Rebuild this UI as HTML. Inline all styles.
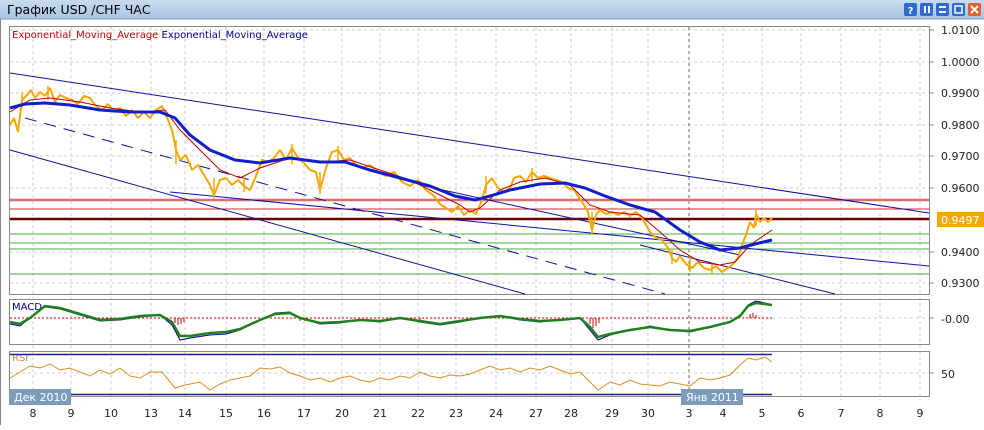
<!DOCTYPE html>
<html><head><meta charset="utf-8"><style>
body{margin:0;width:984px;height:425px;overflow:hidden;background:#fff;font-family:"Liberation Sans","DejaVu Sans",sans-serif}
</style></head><body>
<svg width="984" height="425" xmlns="http://www.w3.org/2000/svg" font-family="'DejaVu Sans','Liberation Sans',sans-serif">
<defs><linearGradient id="tb" x1="0" y1="0" x2="0" y2="1"><stop offset="0" stop-color="#c8dbef"/><stop offset="1" stop-color="#a9c4e2"/></linearGradient></defs>
<rect x="0" y="0" width="984" height="19" fill="url(#tb)"/>
<line x1="0" y1="19" x2="984" y2="19" stroke="#7d9cc4"/>
<text x="7" y="14" font-size="12.5" fill="#000" font-family="'DejaVu Sans',sans-serif">График USD /CHF  ЧАС</text>
<g>
<rect x="904" y="3" width="13" height="13" rx="2" fill="#2f6ad0"/><text x="910.5" y="14" font-size="10" fill="#fff" text-anchor="middle" font-weight="bold">?</text>
<rect x="920" y="3" width="13" height="13" rx="2" fill="#2f6ad0"/><rect x="924" y="6" width="2" height="7" fill="#fff"/><rect x="928" y="6" width="2" height="7" fill="#fff"/>
<rect x="936" y="3" width="13" height="13" rx="2" fill="#2f6ad0"/><rect x="939" y="6" width="7" height="2" fill="#fff"/><rect x="939" y="11" width="7" height="2" fill="#fff"/>
<rect x="952" y="3" width="13" height="13" rx="2" fill="#2f6ad0"/><rect x="955" y="6" width="7" height="7" fill="none" stroke="#fff" stroke-width="1.5"/>
<rect x="968" y="3" width="13" height="13" rx="2" fill="#e06030"/><path d="M971 6l7 7M978 6l-7 7" stroke="#fff" stroke-width="2"/>
</g>
<line x1="0.5" y1="19" x2="0.5" y2="425" stroke="#888"/>
<g stroke="#ccc" stroke-dasharray="3,3" fill="none">
<path d="M33 27V400M71 27V400M111 27V400M151 27V400M185 27V400M226 27V400M264 27V400M304 27V400M342 27V400M380 27V400M418 27V400M456 27V400M496 27V400M536 27V400M571 27V400M612 27V400M648 27V400M723 27V400M762 27V400M801 27V400M841 27V400M880 27V400M920 27V400"/>
<path d="M10 30H929M10 62H929M10 93H929M10 125H929M10 156H929M10 188H929M10 252H929M10 283H929M10 318H929M10 373H929"/>
</g>
<line x1="689" y1="27" x2="689" y2="400" stroke="#666" stroke-dasharray="3,3"/>
<rect x="9.5" y="26.5" width="920" height="268" fill="none" stroke="#888"/>
<rect x="9.5" y="299.5" width="920" height="45" fill="none" stroke="#888"/>
<rect x="9.5" y="351.5" width="920" height="45" fill="none" stroke="#888"/>
<text x="12" y="38" font-size="10" fill="#c00000">Exponential_Moving_Average <tspan fill="#000090">Exponential_Moving_Average</tspan></text>
<g fill="none">
<path d="M10 200H929" stroke="#f0b0b0" stroke-width="3"/>
<path d="M10 200H929M10 209H929" stroke="#c03030"/>
<path d="M10 219H929" stroke="#700000" stroke-width="2.5"/>
<path d="M10 234H929M10 243H929M10 249H929M10 274H929" stroke="#40b040"/>
</g>
<g stroke="#1010a0" fill="none">
<path d="M10 73L929 213"/>
<path d="M10 150L525 294"/>
<path d="M170 192L929 266"/>
<path d="M420 185L740 255"/>
<path d="M25 118L665 294" stroke-dasharray="12,8"/>
<path d="M640 245L835 294"/>
</g>
<polyline fill="none" stroke="#f5a800" stroke-width="2" stroke-linejoin="bevel" points="10,125 14,118 18,132 22,100 27,95 31,90 35,98 40,92 45,96 50,88 55,102 60,95 66,98 72,100 78,104 84,96 90,98 96,106 102,110 108,104 114,112 120,108 126,116 132,110 138,118 144,112 150,118 156,110 162,106 168,120 172,130 176,150 180,160 186,155 192,170 198,165 204,175 210,185 214,195 220,180 226,178 232,185 238,180 244,186 250,190 256,176 262,160 268,162 274,158 280,150 286,160 292,148 298,158 304,163 310,170 316,172 320,190 326,168 332,152 338,150 344,160 350,158 356,165 362,168 370,165 378,172 386,176 394,172 402,182 410,186 418,180 426,190 434,196 440,204 446,208 452,212 458,206 464,215 470,210 476,214 482,200 486,185 492,178 498,188 504,192 510,188 514,178 520,176 526,182 532,172 538,178 544,176 550,178 556,180 562,182 568,188 574,190 578,196 584,205 588,212 592,230 596,215 600,210 606,214 612,212 618,215 624,212 630,216 636,212 642,218 646,225 650,232 656,238 662,240 668,248 672,258 676,262 680,256 686,264 692,268 698,262 704,268 710,270 716,266 722,272 728,268 732,265 738,258 742,245 746,235 750,222 754,228 756,214 760,222 764,218 768,222 772,218"/>
<g stroke="#f5a800" stroke-width="1.5"><path d="M22 92v16M48 86v14M176 140v24M214 178v20M244 176v16M292 144v20M320 172v22M338 146v14M486 176v18M532 168v14M592 212v22M672 250v14M690 256v16M712 262v12M756 210v16"/></g>
<polyline fill="none" stroke="#c00000" stroke-width="1" points="10,112 30,100 50,98 80,102 110,108 140,112 165,110 180,130 200,150 220,170 240,178 260,168 290,158 320,162 350,160 380,170 410,180 440,195 460,205 470,212 480,208 500,190 520,182 545,178 570,185 590,205 610,212 640,215 660,232 680,250 700,262 720,265 735,262 750,245 772,230"/>
<polyline fill="none" stroke="#1020c8" stroke-width="3" points="10,108 25,104 45,103 70,105 100,110 130,112 160,112 175,118 190,135 210,150 235,160 260,163 290,158 320,162 345,162 370,170 400,178 430,186 455,196 475,200 490,196 510,190 540,184 565,183 585,188 605,196 630,205 655,212 680,230 700,242 720,250 740,248 755,244 772,240"/>
<g font-size="11" fill="#222">
<text x="941" y="34">1.0100</text><text x="941" y="66">1.0000</text><text x="941" y="97">0.9900</text>
<text x="941" y="129">0.9800</text><text x="941" y="160">0.9700</text><text x="941" y="192">0.9600</text>
<text x="941" y="256">0.9400</text><text x="941" y="287">0.9300</text>
<text x="941" y="323">-0.00</text><text x="941" y="378">50</text>
</g>
<rect x="937" y="212" width="47" height="15" fill="#f5a800"/>
<text x="941" y="224" font-size="11" fill="#fff">0.9497</text>
<g stroke="#888"><path d="M929 30h5M929 62h5M929 93h5M929 125h5M929 156h5M929 188h5M929 252h5M929 283h5M929 318h5M929 373h5"/></g>
<text x="12" y="310" font-size="10" fill="#000090">MACD</text>
<path d="M10 318H772" stroke="#d00000" stroke-dasharray="2,2"/>
<g stroke="#d00000"><path d="M175 318v5M178 318v7M181 318v6M184 318v4M590 318v6M593 318v10M596 318v8M599 318v5M300 318v3M305 318v3M420 318v2M750 318v-4M753 318v-5M756 318v-3"/></g>
<polyline fill="none" stroke="#000090" stroke-width="1" points="10,324 20,326 30,318 45,307 60,309 80,315 100,321 120,320 140,317 160,315 172,325 180,340 190,338 210,335 226,334 240,330 260,320 275,313 290,312 300,318 320,324 340,323 360,320 380,322 400,318 420,322 440,325 460,322 480,318 500,316 520,320 540,322 560,320 580,318 590,330 598,340 610,335 630,330 650,326 670,330 690,332 710,327 730,322 740,315 748,305 756,301 765,303 772,305"/>
<polyline fill="none" stroke="#208020" stroke-width="2.5" points="10,322 20,324 30,318 45,306 60,308 80,314 100,320 120,319 140,316 160,315 172,322 180,336 190,336 210,333 226,332 240,329 260,320 275,314 290,313 300,318 320,323 340,322 360,320 380,321 400,318 420,321 440,324 460,321 480,318 500,316 520,319 540,321 560,320 580,318 590,327 598,337 610,334 630,330 650,327 670,330 690,331 710,327 730,322 740,316 748,306 756,303 765,304 772,305"/>
<text x="12" y="361" font-size="10" fill="#e08a20">RSI</text>
<path d="M10 354.5H772M10 394.5H772" stroke="#202090" stroke-width="1.5"/>
<polyline fill="none" stroke="#e08a20" stroke-width="1" points="10,378 20,372 30,366 40,368 50,364 60,370 70,368 80,372 90,376 100,370 110,374 120,368 130,376 140,378 150,372 162,372 175,388 185,385 200,382 210,390 220,384 230,380 240,378 250,376 260,368 270,369 280,367 290,373 300,376 310,380 320,378 330,382 340,378 350,376 360,380 370,382 380,378 390,380 400,376 410,378 420,372 430,376 440,378 450,375 460,376 470,374 480,370 490,366 500,370 510,368 520,372 530,368 540,370 550,366 560,370 570,374 580,372 590,382 598,390 610,382 620,385 630,380 640,384 650,385 660,386 670,382 680,384 690,386 700,378 710,380 720,378 730,375 740,365 748,358 756,360 765,357 772,362"/>
<rect x="9" y="389" width="62" height="16" fill="#7b9cbc"/>
<text x="14" y="401" font-size="11" fill="#fff">Дек 2010</text>
<rect x="681" y="389" width="62" height="16" fill="#7b9cbc"/>
<text x="686" y="401" font-size="11" fill="#fff">Янв 2011</text>
<g font-size="11" fill="#222" text-anchor="middle">
<text x="33" y="417">8</text><text x="71" y="417">9</text><text x="111" y="417">10</text><text x="151" y="417">13</text><text x="185" y="417">14</text><text x="226" y="417">15</text><text x="264" y="417">16</text><text x="304" y="417">17</text><text x="342" y="417">20</text><text x="380" y="417">21</text><text x="418" y="417">22</text><text x="456" y="417">23</text><text x="496" y="417">24</text><text x="536" y="417">27</text><text x="571" y="417">28</text><text x="612" y="417">29</text><text x="648" y="417">30</text><text x="689" y="417">3</text><text x="723" y="417">4</text><text x="762" y="417">5</text><text x="801" y="417">6</text><text x="841" y="417">7</text><text x="880" y="417">8</text><text x="920" y="417">9</text>
</g>
</svg>
</body></html>
